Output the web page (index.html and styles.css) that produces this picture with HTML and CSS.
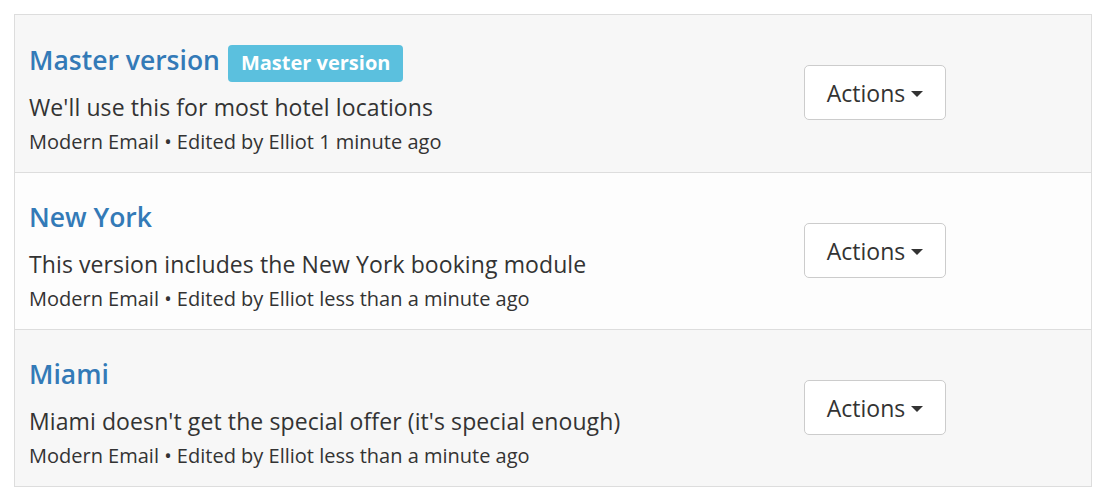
FILE: index.html
```html
<!DOCTYPE html>
<html>
<head>
<meta charset="utf-8">
<link rel="stylesheet" href="styles.css">
</head>
<body>
<div class="list">
  <div class="item item-alt">
    <div class="info">
      <h3 class="title"><a href="#">Master version</a><span class="badge">Master version</span></h3>
      <p class="desc">We'll use this for most hotel locations</p>
      <p class="meta">Modern Email • Edited by Elliot 1 minute ago</p>
    </div>
    <div class="actions">
      <button class="btn">Actions <span class="caret"></span></button>
    </div>
  </div>
  <div class="item">
    <div class="info">
      <h3 class="title"><a href="#">New York</a></h3>
      <p class="desc">This version includes the New York booking module</p>
      <p class="meta">Modern Email • Edited by Elliot less than a minute ago</p>
    </div>
    <div class="actions">
      <button class="btn">Actions <span class="caret"></span></button>
    </div>
  </div>
  <div class="item item-alt">
    <div class="info">
      <h3 class="title"><a href="#">Miami</a></h3>
      <p class="desc">Miami doesn't get the special offer (it's special enough)</p>
      <p class="meta">Modern Email • Edited by Elliot less than a minute ago</p>
    </div>
    <div class="actions">
      <button class="btn">Actions <span class="caret"></span></button>
    </div>
  </div>
</div>
</body>
</html>
```
FILE: styles.css
```css
* { box-sizing: border-box; }
html, body { margin: 0; padding: 0; background: #ffffff; }
body {
  font-family: "Open Sans", "Noto Sans", sans-serif;
  color: #333333;
  padding: 14px 18px 0 14px;
}
.list {
  border: 1px solid #dddddd;
  width: 1078px;
}
.item {
  display: flex;
  align-items: flex-start;
  height: 157px;
  padding: 25px 0 0 14px;
  background: #fdfdfd;
  border-top: 1px solid #dddddd;
}
.item:first-child { border-top: none; padding-top: 26px; }
.item-alt { background: #f7f7f7; }
.info { flex: 1; }
.title {
  margin: 0;
  height: 38px;
  font-size: 26.5px;
  font-weight: 600;
  line-height: 38px;
  white-space: nowrap;
}
.title a { color: #337ab7; text-decoration: none; }
.badge {
  display: inline-block;
  vertical-align: baseline;
  margin-left: 8px;
  background: #5bc0de;
  color: #ffffff;
  font-size: 20px;
  font-weight: 700;
  line-height: 34px;
  padding: 1px 13px 2px 13px;
  border-radius: 4px;
}
.desc {
  margin: 13px 0 0 0;
  font-size: 23px;
  line-height: 30px;
  letter-spacing: 0.1px;
}
.meta {
  margin: 6px 0 0 0;
  font-size: 20px;
  line-height: 28px;
}
.actions {
  width: 287px;
  padding-top: 25px;
}
.item:first-child .actions { padding-top: 24px; }
.btn {
  font-family: "Open Sans", "Noto Sans", sans-serif;
  font-size: 23px;
  color: #333333;
  background: #ffffff;
  border: 1px solid #cccccc;
  border-radius: 5px;
  width: 142px;
  height: 55px;
  padding: 0;
  display: flex;
  align-items: center;
  justify-content: center;
  gap: 6px;
}
.caret {
  width: 0;
  height: 0;
  border-left: 6px solid transparent;
  border-right: 6px solid transparent;
  border-top: 6px solid #333333;
  margin-top: 2px;
}
```
